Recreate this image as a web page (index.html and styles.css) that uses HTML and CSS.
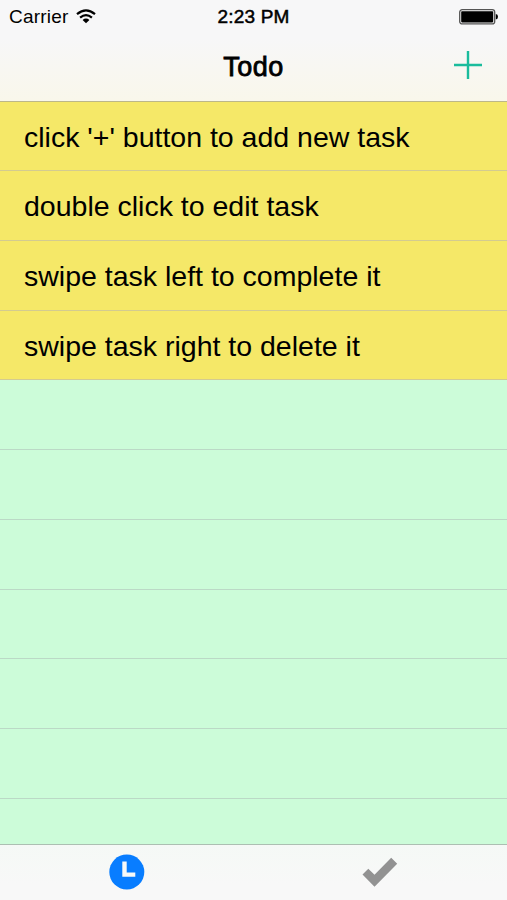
FILE: index.html
```html
<!DOCTYPE html>
<html lang="en">
<head>
<meta charset="utf-8">
<title>Todo</title>
<link rel="stylesheet" href="styles.css">
</head>
<body>
<header class="top">
  <div class="status">
    <div class="carrier"><span>Carrier</span>
      <svg class="wifi" width="20" height="15" viewBox="0 0 20 15" fill="none" stroke="#000" stroke-width="2.2"><path d="M1 5.2Q10-2.5 19 5.2M4.1 8.6Q10 3.6 15.9 8.6"/><path d="M6.6 11Q10 8.2 13.4 11L10 14.3Z" fill="#000" stroke="none"/></svg>
    </div>
    <time class="time">2:23 PM</time>
    <svg class="battery" width="39" height="16" viewBox="0 0 39 16"><rect x=".7" y=".7" width="35" height="14.2" rx="2.5" fill="#f7f7f7" stroke="#555" stroke-width="1.3"/><rect x="2.2" y="2.2" width="32" height="11.2" rx=".8"/><path d="M36.8 5Q39 5.3 39 7.8T36.8 10.6Z"/></svg>
  </div>
  <div class="nav">
    <h1 class="title">Todo</h1>
    <button class="add" aria-label="Add task"><svg width="28" height="28" viewBox="0 0 28 28" stroke="#1abc9c" stroke-width="2.4"><path d="M0 14H28M14 0V28"/></svg></button>
  </div>
</header>
<ul class="list">
  <li class="row task">click '+' button to add new task</li>
  <li class="row task">double click to edit task</li>
  <li class="row task">swipe task left to complete it</li>
  <li class="row task">swipe task right to delete it</li>
  <li class="row"></li><li class="row"></li><li class="row"></li>
  <li class="row"></li><li class="row"></li><li class="row"></li><li class="row"></li>
</ul>
<footer class="tabs">
  <button class="tab" aria-label="Pending"><svg width="36" height="36" viewBox="0 0 36 36"><circle cx="17.8" cy="18" r="17.5" fill="#087dff"/><path d="M15.5 7.6V20.6H26.3" fill="none" stroke="#f7f9f8" stroke-width="4.4"/></svg></button>
  <button class="tab" aria-label="Completed"><svg width="36" height="36" viewBox="0 0 36 36"><path d="M.5 20.5L6.3 14.8L12.5 20.7L29.2 3.8L35.2 9.8L12.5 32.8Z" fill="#929292"/></svg></button>
</footer>
</body>
</html>
```
FILE: styles.css
```css
* { box-sizing: border-box; }
body {
  margin: 0;
  height: 900px;
  display: flex;
  flex-direction: column;
  overflow: hidden;
  background: #ccfcd9;
  color: #000;
  font-family: "Liberation Sans", Arial, sans-serif;
}
button { padding: 0; border: 0; background: none; line-height: 0; }
.top {
  flex: none;
  height: 102px;
  border-bottom: 1px solid #bcb789;
  background: linear-gradient(#f7f7f8 0, #f7f7f8 38%, #f9f7eb 100%);
}
.status {
  height: 32px;
  padding: 1px 9px 0;
  display: grid;
  grid-template-columns: 1fr auto 1fr;
  align-items: center;
}
.carrier {
  display: flex;
  align-items: center;
  gap: 8px;
  font-size: 19px;
  letter-spacing: .2px;
}
.time {
  font-size: 19px;
  letter-spacing: .2px;
  -webkit-text-stroke: .5px #000;
}
.battery { justify-self: end; }
.nav {
  height: 69px;
  padding-right: 25px;
  display: grid;
  grid-template-columns: 1fr auto 1fr;
  align-items: center;
}
.title {
  grid-column: 2;
  margin: 2px 0 0 25px;
  font-size: 27px;
  font-weight: normal;
  letter-spacing: .5px;
  -webkit-text-stroke: .8px #000;
}
.add { justify-self: end; margin-bottom: 4px; }
.list {
  flex: 1;
  min-height: 0;
  margin: -.5px 0 0;
  padding: 0;
  overflow: hidden;
  list-style: none;
}
.row {
  height: 69.72px;
  padding-left: 24px;
  border-bottom: 1px solid #bbd9c6;
  font-size: 28.5px;
  line-height: 70px;
  white-space: nowrap;
}
.task { background: #f5e868; border-color: #d3cb90; }
.tabs {
  flex: none;
  height: 56px;
  padding-bottom: 1px;
  display: grid;
  grid-template-columns: 1fr 1fr;
  place-items: center;
  border-top: 1px solid #acbfb2;
  background: linear-gradient(#f5f9f6, #f8f8f8 70%);
}
```
